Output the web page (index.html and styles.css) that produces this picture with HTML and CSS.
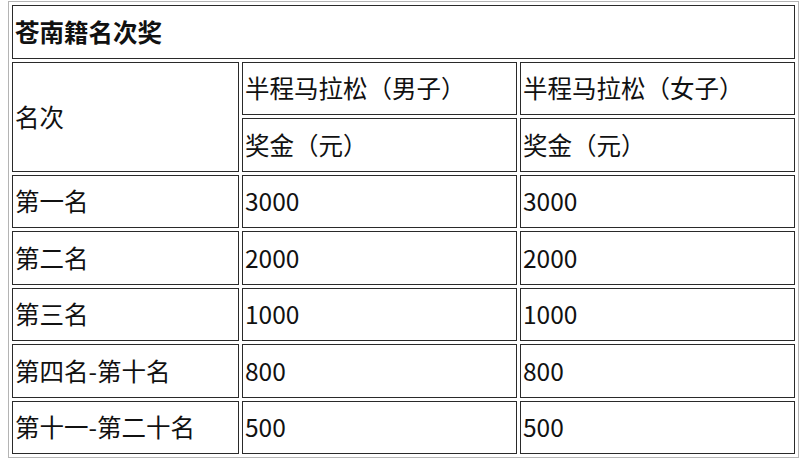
FILE: index.html
```html
<!DOCTYPE html>
<html lang="zh-CN">
<head>
<meta charset="utf-8">
<title>苍南籍名次奖</title>
<link rel="stylesheet" href="styles.css">
</head>
<body>
<table class="prize">
  <colgroup>
    <col class="c1">
    <col class="c2">
    <col class="c3">
  </colgroup>
  <tr>
    <td class="title" colspan="3">苍南籍名次奖</td>
  </tr>
  <tr>
    <td rowspan="2">名次</td>
    <td>半程马拉松（男子）</td>
    <td>半程马拉松（女子）</td>
  </tr>
  <tr>
    <td>奖金（元）</td>
    <td>奖金（元）</td>
  </tr>
  <tr><td>第一名</td><td>3000</td><td>3000</td></tr>
  <tr><td>第二名</td><td>2000</td><td>2000</td></tr>
  <tr><td>第三名</td><td>1000</td><td>1000</td></tr>
  <tr><td>第四名-第十名</td><td>800</td><td>800</td></tr>
  <tr><td>第十一-第二十名</td><td>500</td><td>500</td></tr>
</table>
</body>
</html>
```
FILE: styles.css
```css
html, body {
  background: #ffffff;
}
body {
  margin: 1px 0 0 8px;
  font-family: "Noto Sans CJK SC", "Noto Sans", sans-serif;
  color: #111111;
}
.prize {
  width: 791px;
  border: 1px solid #b4b4b4;
  border-collapse: separate;
  border-spacing: 3px;
  table-layout: fixed;
}
.c1 { width: 227px; }
.c2 { width: 275px; }
.c3 { width: 275px; }
.prize td {
  box-sizing: border-box;
  height: 53.5px;
  border: 1px solid #2a2a2a;
  padding: 0 2px;
  font-size: 24.5px;
  line-height: 28px;
  vertical-align: middle;
  text-align: left;
  white-space: nowrap;
}
.prize td.title {
  font-weight: 700;
}
```
